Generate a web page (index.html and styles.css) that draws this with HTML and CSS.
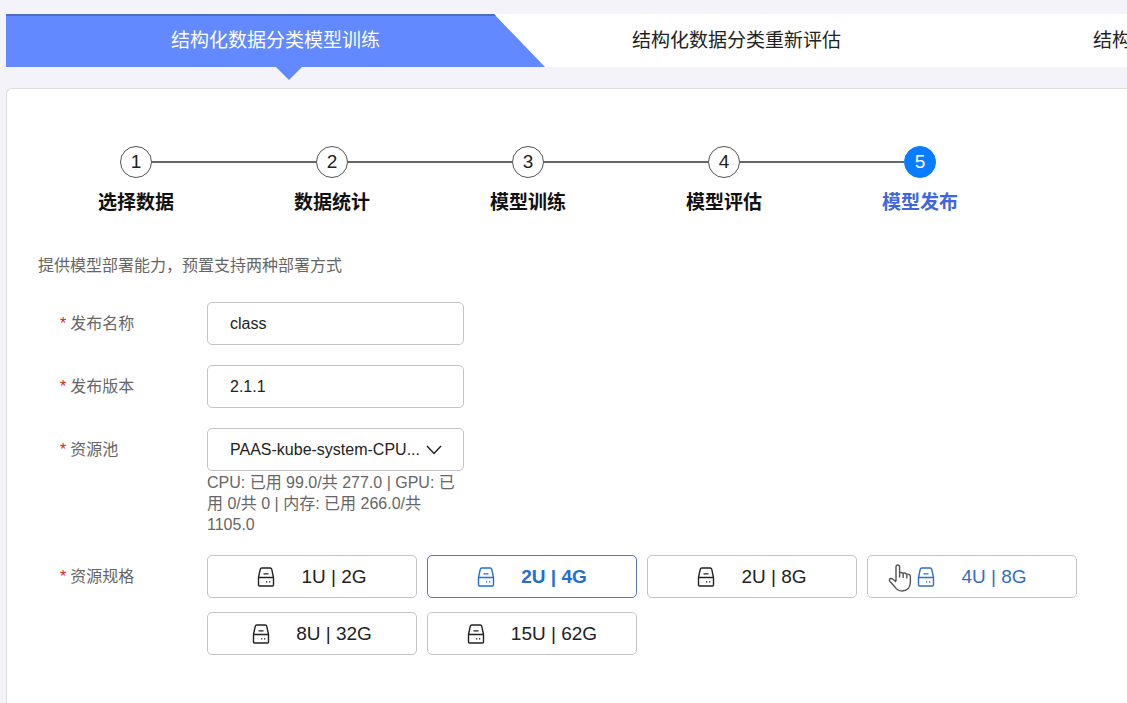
FILE: index.html
```html
<!DOCTYPE html>
<html lang="zh-CN">
<head>
    <meta charset="UTF-8">
    <meta name="viewport" content="width=device-width, initial-scale=1.0">
    <title>模型发布</title>

    <link rel="stylesheet" href="styles.css">
</head>

<body>
    <!-- 公用图标 -->
    <svg class="icon-defs" aria-hidden="true">
        <symbol id="icon-server" viewBox="0 0 18 20">
            <path d="M1.5 10.5 L3.3 2.2 Q3.6 1 4.8 1 H13.2 Q14.4 1 14.7 2.2 L16.5 10.5 V18 Q16.5 19 15.5 19 H2.5 Q1.5 19 1.5 18 Z M1.5 10.5 H16.5" fill="none" stroke="currentColor" stroke-width="1.4" stroke-linejoin="round"/>
            <path d="M6.5 6.8 H11.5 M9 14.8 H10.3 M12 14.8 H13.3" fill="none" stroke="currentColor" stroke-width="1.2"/>
        </symbol>
    </svg>

    <!-- 顶部任务标签 -->
    <nav class="tabs">
        <a class="tab active" href="#train">结构化数据分类模型训练</a>
        <a class="tab" href="#evaluate">结构化数据分类重新评估</a>
        <a class="tab" href="#predict">结构化数据分类模型预测</a>
    </nav>

    <main class="panel">
        <!-- 步骤条 -->
        <ol class="steps">
            <li class="step"><span class="step-num">1</span><span class="step-title">选择数据</span></li>
            <li class="step"><span class="step-num">2</span><span class="step-title">数据统计</span></li>
            <li class="step"><span class="step-num">3</span><span class="step-title">模型训练</span></li>
            <li class="step"><span class="step-num">4</span><span class="step-title">模型评估</span></li>
            <li class="step current"><span class="step-num">5</span><span class="step-title">模型发布</span></li>
        </ol>

        <p class="intro">提供模型部署能力，预置支持两种部署方式</p>

        <!-- 发布表单 -->
        <form class="publish-form">
            <div class="row">
                <label class="label" for="name">发布名称</label>
                <input class="field" type="text" id="name" name="name" value="class" required>
            </div>
            <div class="row">
                <label class="label" for="version">发布版本</label>
                <input class="field" type="text" id="version" name="version" value="2.1.1" required>
            </div>
            <div class="row">
                <label class="label" for="pool">资源池</label>
                <div class="pool">
                    <div class="select-box">
                        <select class="field" id="pool" name="pool">
                            <option>PAAS-kube-system-CPU...</option>
                        </select>
                        <svg class="arrow" viewBox="0 0 16 10" aria-hidden="true">
                            <path d="M1 1 L8 8.5 L15 1" fill="none" stroke="currentColor" stroke-width="1.4"/>
                        </svg>
                    </div>
                    <p class="hint">CPU: 已用 99.0/共 277.0 | GPU: 已用 0/共 0 | 内存: 已用 266.0/共 1105.0</p>
                </div>
            </div>
            <div class="row">
                <span class="label" id="spec-label">资源规格</span>
                <div class="specs" role="group" aria-labelledby="spec-label">
                    <button type="button" class="spec"><svg class="icon"><use href="#icon-server"/></svg>1U | 2G</button>
                    <button type="button" class="spec selected"><svg class="icon"><use href="#icon-server"/></svg>2U | 4G</button>
                    <button type="button" class="spec"><svg class="icon"><use href="#icon-server"/></svg>2U | 8G</button>
                    <button type="button" class="spec hovered"><svg class="icon"><use href="#icon-server"/></svg>4U | 8G
                        <svg class="cursor" viewBox="0 0 24 28" aria-hidden="true">
                            <path d="M8 17 V3 Q8 1 9.8 1 T11.6 3 V9 Q13 7.8 15 9.2 Q17 8.6 18.6 10.2 Q22.4 9.6 22.4 13 V18 Q22 27 14 27 Q9.5 27 7 23 L2 17.5 Q0.5 15.5 2.5 14.5 Q4.5 14 8 18 M11.6 9 V13.5 M15.2 9.5 V14 M18.8 10.5 V14.5" fill="#fff" stroke="#555" stroke-width="1.4" stroke-linejoin="round"/>
                        </svg>
                    </button>
                    <button type="button" class="spec"><svg class="icon"><use href="#icon-server"/></svg>8U | 32G</button>
                    <button type="button" class="spec"><svg class="icon"><use href="#icon-server"/></svg>15U | 62G</button>
                </div>
            </div>
        </form>
    </main>
</body>
</html>
```
FILE: styles.css
```css
* {
    box-sizing: border-box;
}

body {
    font-family: "Liberation Sans", "Noto Sans CJK SC", sans-serif;
    font-size: 16px;
    margin: 0;
    padding: 14px 0 0 6px;
    min-height: 100vh;
    display: flex;
    flex-direction: column;
    background-color: #f3f3f9;
    color: #222;
}

.icon-defs {
    position: absolute;
    width: 0;
    height: 0;
}

/* 顶部标签 */
.tabs {
    display: flex;
    height: 74px;
    overflow: hidden;
    background: linear-gradient(#fff, #fff) no-repeat 0 0 / 100% 53px;
}

.tab {
    position: relative;
    z-index: 0;
    flex: 0 0 539px;
    height: 53px;
    margin-right: -78px;
    line-height: 53px;
    font-size: 19px;
    text-align: center;
    text-decoration: none;
    color: #222;
}

.tab.active {
    color: #fff;
}

/* 斜边底色 */
.tab.active::before {
    content: "";
    position: absolute;
    inset: 0;
    z-index: -1;
    background-color: #6289ff;
    border-top: 2px solid #4f6cc0;
    clip-path: polygon(0 0, 488px 0, 100% 100%, 0 100%);
}

.tab.active::after {
    content: "";
    position: absolute;
    top: 100%;
    left: 270px;
    border: 13px solid transparent;
    border-top-color: #6289ff;
    border-bottom: 0;
}

/* 内容面板 */
.panel {
    flex: 1;
    padding: 57px 31px 40px;
    background-color: #fff;
    border: 1px solid #dcdce0;
    border-width: 1px 0 0 1px;
    border-radius: 6px 0 0 0;
}

/* 步骤条 */
.steps {
    display: flex;
    margin: 0;
    padding: 0;
    list-style: none;
}

.step {
    position: relative;
    display: flex;
    flex-direction: column;
    align-items: center;
    gap: 11px;
    width: 196px;
}

.step + .step::before {
    content: "";
    position: absolute;
    top: 15px;
    right: 114px;
    width: 164px;
    height: 2px;
    background-color: #666;
}

.step-num {
    width: 32px;
    height: 32px;
    line-height: 30px;
    font-size: 19px;
    text-align: center;
    border: 1px solid #555;
    border-radius: 50%;
}

.step-title {
    line-height: 28px;
    font-size: 19px;
    font-weight: bold;
    color: #111;
}

.step.current .step-num {
    background-color: #0a7cff;
    border-color: #0a7cff;
    color: #fff;
}

.step.current .step-title {
    color: #3f66e0;
}

.intro {
    margin: 37px 0 24px;
    line-height: 24px;
    color: #666;
}

/* 表单 */
.publish-form {
    display: flex;
    flex-direction: column;
    gap: 20px;
}

.row {
    display: flex;
    align-items: flex-start;
}

.label {
    flex: 0 0 169px;
    padding-left: 22px;
    line-height: 43px;
    color: #666;
}

.label::before {
    content: "*";
    margin-right: 4px;
    color: #e02020;
}

.field {
    width: 257px;
    height: 43px;
    padding: 0 22px;
    font-family: inherit;
    font-size: 16px;
    color: #222;
    background-color: #fff;
    border: 1px solid #c4c4c8;
    border-radius: 5px;
}

select.field {
    display: block;
    padding-right: 40px;
    appearance: none;
}

.pool {
    width: 257px;
}

.select-box {
    position: relative;
}

.arrow {
    position: absolute;
    top: 17px;
    right: 22px;
    width: 16px;
    height: 10px;
    pointer-events: none;
}

.hint {
    margin: 1px 0 0;
    line-height: 21px;
    color: #666;
}

/* 资源规格 */
.specs {
    display: flex;
    flex-wrap: wrap;
    gap: 14px 10px;
}

.spec {
    position: relative;
    display: flex;
    align-items: center;
    justify-content: center;
    gap: 26px;
    width: 210px;
    height: 43px;
    padding: 0;
    font-family: inherit;
    font-size: 19px;
    color: #222;
    background-color: #fff;
    border: 1px solid #c4c4c8;
    border-radius: 5px;
    cursor: pointer;
}

.spec.selected {
    font-weight: bold;
    color: #1f6fd6;
    border-color: #5577bb;
}

.spec.hovered,
.spec:hover {
    color: #2f6fc4;
}

.icon {
    width: 18px;
    height: 20px;
}

.cursor {
    position: absolute;
    top: 8px;
    left: 20px;
    width: 24px;
    height: 28px;
}
```
